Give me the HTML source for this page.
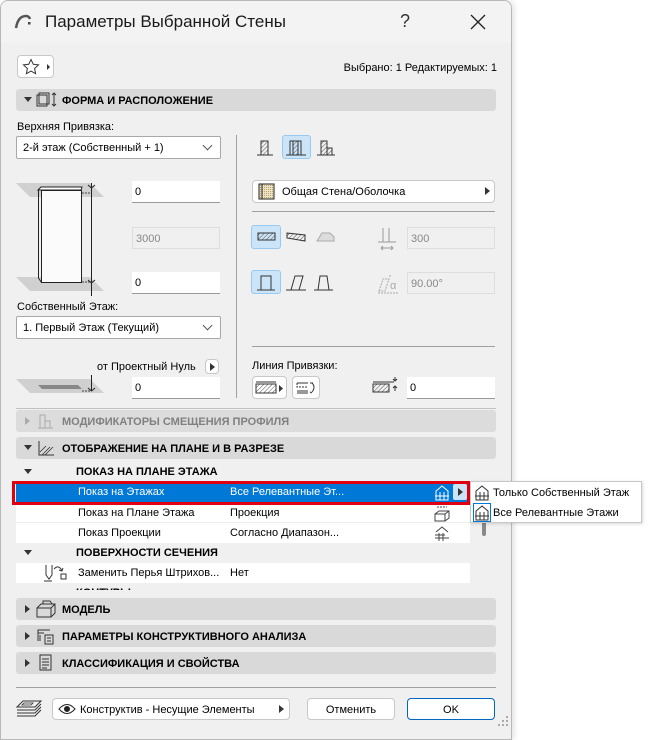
<!DOCTYPE html>
<html><head><meta charset="utf-8"><style>
*{box-sizing:border-box;margin:0;padding:0}
body{width:652px;height:730px;background:#fff;font-family:"Liberation Sans",sans-serif;font-size:11px;color:#000;position:relative;overflow:hidden}
.a{position:absolute}
#dlg{left:0;top:0;width:512px;height:740px;background:#f0f0f0;border:1px solid #b8b8b8;border-radius:8px 8px 0 0;box-shadow:2px 0 6px rgba(0,0,0,.12);overflow:hidden}
#in{position:absolute;left:-1px;top:-1px;width:512px;height:740px}
.inp{position:absolute;background:#fff;border-bottom:1px solid #9a9a9a;height:22px;padding:5px 3px;font-size:11px}
.dis{background:#f0f0f0;border:1px solid #ddd;color:#888}
.dd{position:absolute;background:#fff;border:1px solid #a8a8a8;border-radius:2px;height:23px;padding:5px 6px;font-size:11px}
.dd:after{content:"";position:absolute;right:9px;top:5px;width:6px;height:6px;border-right:1px solid #555;border-bottom:1px solid #555;transform:rotate(45deg)}
.sec{position:absolute;left:16px;width:480px;height:22px;background:#d9d9d9;border-radius:3px;font-weight:bold;font-size:11px;padding:6px 0 0 46px}
.tri{position:absolute;left:8px;top:8px;width:0;height:0}
.td{border-left:4px solid transparent;border-right:4px solid transparent;border-top:5px solid #333}
.tr{border-top:4px solid transparent;border-bottom:4px solid transparent;border-left:5px solid #333;top:7px;left:9px}
.btn{position:absolute;background:#fff;border:1px solid #c8c8c8;border-radius:4px}
.sel{position:absolute;background:#cce4f7;border:1px solid #99c9ef;border-radius:3px}
.hl{position:absolute;height:1px;background:#a0a0a0}
.row{position:absolute;left:16px;width:454px;height:20px;font-size:11px}
.row span{position:absolute;top:4px}
</style></head><body>
<div id="dlg" class="a"><div id="in">
 <div class="a" style="left:0;top:0;width:512px;height:43px;background:#f3f3f3"></div>
 <svg class="a" style="left:14px;top:12px" width="20" height="18"><path d="M2 16 Q4 4 12 4 Q15 4 16 7" fill="none" stroke="#555" stroke-width="2.5"/><rect x="14" y="10" width="2.5" height="2.5" fill="#444"/></svg>
 <div class="a" style="left:45px;top:12px;font-size:17px;color:#1a1a1a">Параметры Выбранной Стены</div>
 <div class="a" style="left:400px;top:11px;font-size:18px;color:#333">?</div>
 <svg class="a" style="left:469px;top:13px" width="18" height="18"><path d="M2 2L16 16M16 2L2 16" stroke="#222" stroke-width="1.3"/></svg>

 <div class="btn" style="left:17px;top:55px;width:37px;height:23px"><svg class="a" style="left:4px;top:2px" width="30" height="18"><path d="M9 1.5l2.3 4.8 5.2.6-3.9 3.6 1 5.2L9 13.1l-4.6 2.6 1-5.2L1.5 6.9l5.2-.6z" fill="none" stroke="#333"/><path d="M25 6v6l3-3z" fill="#333"/></svg></div>
 <div class="a" style="right:15px;top:62px;font-size:11px">Выбрано: 1 Редактируемых: 1</div>

 <div class="sec" style="top:89px"><i class="tri td"></i><svg class="a" style="left:20px;top:3px" width="22" height="16"><rect x="3" y="1" width="10" height="11" fill="none" stroke="#333"/><rect x="1" y="3" width="10" height="11" fill="none" stroke="#333"/><path d="M18 1v13M16 3l2-2 2 2M16 12l2 2 2-2" fill="none" stroke="#333"/></svg>ФОРМА И РАСПОЛОЖЕНИЕ</div>

 <div class="a" style="left:17px;top:121px">Верхняя Привязка:</div>
 <div class="dd" style="left:16px;top:136px;width:205px">2-й этаж (Собственный + 1)</div>
 <div class="a" style="left:236px;top:135px;width:1px;height:263px;background:#a0a0a0"></div>

 <svg class="a" style="left:0;top:176px" width="110" height="120"><path d="M16 7h74l14 14H30z" fill="#d0d0d0"/><path d="M16 101h74l14 14H30z" fill="#d0d0d0"/><path d="M38 14l3-3h41l-1 3z" fill="#fff" stroke="#222"/><rect x="41.5" y="14.5" width="40" height="92" fill="#fbfbfb" stroke="#222"/><path d="M38.5 14v88l3 4.5" fill="none" stroke="#222"/><path d="M91.5 7v115M88 9l3.5 3 3.5-3M88 104l3.5 3 3.5-3" fill="none" stroke="#222"/><path d="M82 17h9M82 106h9" stroke="#444" stroke-dasharray="2 1"/></svg>
 <div class="inp" style="left:132px;top:181px;width:88px">0</div>
 <div class="inp dis" style="left:132px;top:227px;width:88px">3000</div>
 <div class="inp" style="left:132px;top:272px;width:88px">0</div>

 <div class="a" style="left:17px;top:301px">Собственный Этаж:</div>
 <div class="dd" style="left:16px;top:316px;width:205px">1. Первый Этаж (Текущий)</div>
 <div class="a" style="left:97px;top:361px">от Проектный Нуль</div>
 <div class="btn" style="left:205px;top:359px;width:14px;height:15px"><i class="a" style="left:4px;top:3px;border-top:4px solid transparent;border-bottom:4px solid transparent;border-left:5px solid #333"></i></div>
 <svg class="a" style="left:0;top:374px" width="110" height="26"><path d="M16 5h74l14 14H30z" fill="#d0d0d0"/><path d="M38 11h40l4 4H42z" fill="#888"/><path d="M91.5 1v16M88 14l3.5 3 3.5-3" fill="none" stroke="#222"/><path d="M82 17h9" stroke="#444" stroke-dasharray="2 1"/></svg>
 <div class="inp" style="left:132px;top:377px;width:88px">0</div>

 <svg class="a" style="left:255px;top:137px" width="85" height="22"><defs><pattern id="h" width="3" height="3" patternUnits="userSpaceOnUse" patternTransform="rotate(45)"><path d="M0 0v3" stroke="#555"/></pattern></defs><rect x="6" y="4" width="7" height="14" fill="url(#h)" stroke="#333"/><path d="M2 18h16" stroke="#333"/></svg>
 <div class="sel" style="left:282px;top:135px;width:29px;height:24px"></div>
 <svg class="a" style="left:284px;top:137px" width="26" height="22"><rect x="6" y="4" width="11" height="14" fill="none" stroke="#333"/><rect x="9" y="4" width="5" height="14" fill="url(#h)" stroke="#333"/><path d="M2 18h20" stroke="#333"/></svg>
 <svg class="a" style="left:315px;top:137px" width="24" height="22"><rect x="6" y="4" width="6" height="14" fill="url(#h)" stroke="#333"/><rect x="12" y="11" width="5" height="7" fill="url(#h)" stroke="#333"/><path d="M2 18h18" stroke="#333"/></svg>

 <div class="btn" style="left:252px;top:180px;width:243px;height:23px"><svg class="a" style="left:5px;top:2px" width="18" height="18"><defs><pattern id="d" width="2" height="2" patternUnits="userSpaceOnUse"><rect width="1" height="1" fill="#a08040"/><rect width="2" height="2" fill="#d8c890" opacity=".5"/></pattern></defs><rect x="1" y="1" width="15" height="15" fill="url(#d)" stroke="#222"/><path d="M4 1v15" stroke="#222"/></svg><span class="a" style="left:29px;top:5px">Общая Стена/Оболочка</span><i class="a" style="right:4px;top:6px;border-top:4px solid transparent;border-bottom:4px solid transparent;border-left:5px solid #333"></i></div>
 <div class="hl" style="left:252px;top:211px;width:243px"></div>

 <div class="sel" style="left:251px;top:225px;width:30px;height:24px"></div>
 <svg class="a" style="left:251px;top:225px" width="90" height="24"><rect x="7" y="8" width="17" height="7" fill="url(#h)" stroke="#333"/><path d="M36 8l18 2v6l-18-3z" fill="url(#h)" stroke="#333"/><path d="M66 16l5-8h8l4 4v4z" fill="#ddd" stroke="#aaa"/></svg>
 <svg class="a" style="left:376px;top:226px" width="22" height="26" stroke="#999" fill="none"><path d="M7 2v14h6V2M2 16h18M5 22h12M5 22l2-2M5 22l2 2M17 22l-2-2M17 22l-2 2"/></svg>
 <div class="inp dis" style="left:407px;top:227px;width:88px">300</div>

 <div class="sel" style="left:251px;top:270px;width:30px;height:24px"></div>
 <svg class="a" style="left:251px;top:270px" width="90" height="24" fill="none" stroke="#333"><path d="M10 20V6h10v14M6 20h18"/><path d="M40 20l4-14h8l-4 14M35 20h20"/><path d="M67 20l2-14h7l2 14M63 20h19"/></svg>
 <svg class="a" style="left:376px;top:271px" width="26" height="24" fill="none" stroke="#aaa"><path d="M3 20l4-12h6l-4 12zM14 4v3M2 22h20" stroke-dasharray="2 1"/><text x="14" y="18" font-size="11" fill="#aaa" stroke="none" font-family="Liberation Sans">α</text></svg>
 <div class="inp dis" style="left:407px;top:272px;width:88px">90.00°</div>

 <div class="hl" style="left:252px;top:346px;width:243px"></div>
 <div class="a" style="left:252px;top:360px">Линия Привязки:</div>
 <div class="btn" style="left:252px;top:376px;width:35px;height:23px"><svg class="a" style="left:2px;top:3px" width="30" height="17"><rect x="1" y="4" width="20" height="9" fill="url(#h)" stroke="#333"/><path d="M1 2h20" stroke="#333"/><path d="M24 5v7l4-3.5z" fill="#333"/></svg></div>
 <div class="btn" style="left:292px;top:376px;width:28px;height:23px"><svg class="a" style="left:2px;top:2px" width="24" height="18" fill="none" stroke="#333"><path d="M2 4h11M2 12h11M2 14h11" /><path d="M2 4v4h11" stroke-dasharray="2 1"/><path d="M17 4q4 4 0 9M15 4h3M15 13l2 1"/></svg></div>
 <svg class="a" style="left:372px;top:376px" width="30" height="22" fill="none" stroke="#333"><rect x="1" y="8" width="16" height="8" fill="url(#h)"/><path d="M1 6h16M17 6h5" /><path d="M23 1v4M21 3l2 2 2-2M23 15v-5M21 12l2-2 2 2"/></svg>
 <div class="inp" style="left:407px;top:377px;width:88px">0</div>

 <div class="hl" style="left:16px;top:408px;width:480px;background:#c0c0c0"></div>

 <div class="sec" style="top:410px;color:#808080;background:#dcdcdc"><i class="tri tr" style="border-left-color:#aaa"></i><svg class="a" style="left:20px;top:3px" width="20" height="16" fill="none" stroke="#aaa"><path d="M4 15V2h5v13M9 15V8h5v7M2 15h15"/></svg>МОДИФИКАТОРЫ СМЕЩЕНИЯ ПРОФИЛЯ</div>
 <div class="sec" style="top:437px"><i class="tri td"></i><svg class="a" style="left:20px;top:3px" width="20" height="16" fill="none" stroke="#333"><path d="M3 1v14h15"/><path d="M6 15l8-8M9 15l8-8M4 12l6-6" stroke-width=".8"/></svg>ОТОБРАЖЕНИЕ НА ПЛАНЕ И В РАЗРЕЗЕ</div>

 <div class="a" style="left:16px;top:462px;width:454px;height:128px;background:#fff;overflow:hidden">
  <div class="row" style="left:0;top:0;background:#f0f0f0;font-weight:bold"><i class="a" style="left:8px;top:7px;border-left:4px solid transparent;border-right:4px solid transparent;border-top:5px solid #333"></i><span style="left:60px">ПОКАЗ НА ПЛАНЕ ЭТАЖА</span></div>
  <div class="row" style="left:0;top:20px;background:#0078d7;color:#fff;height:21px"><span style="left:62px">Показ на Этажах</span><span style="left:214px">Все Релевантные Эт...</span>
   <svg class="a" style="left:418px;top:2px" width="16" height="17" fill="none" stroke="#fff"><path d="M2 7l6-5 6 5v9H2zM1 12h14M6 8v8M10 8v8"/></svg>
   <div class="a" style="left:437px;top:2px;width:14px;height:16px;background:#cce4f7;border-radius:2px"><i class="a" style="left:5px;top:4px;border-top:4px solid transparent;border-bottom:4px solid transparent;border-left:5px solid #333"></i></div></div>
  <div class="row" style="left:0;top:41px;border-bottom:1px solid #eee"><span style="left:62px">Показ на Плане Этажа</span><span style="left:214px">Проекция</span><svg class="a" style="left:418px;top:2px" width="16" height="17" fill="none" stroke="#444"><path d="M3 2h10" stroke-dasharray="2 1"/><path d="M1 9l4-3h10v7l-4 3H1zM1 9h10v7M11 9l4-3"/></svg></div>
  <div class="row" style="left:0;top:61px"><span style="left:62px">Показ Проекции</span><span style="left:214px">Согласно Диапазон...</span><svg class="a" style="left:418px;top:2px" width="16" height="17" fill="none" stroke="#444"><path d="M2 7l6-5 6 5M1 10h10M1 13h14M5 8v8M9 8v8"/></svg></div>
  <div class="row" style="left:0;top:81px;background:#f0f0f0;font-weight:bold"><i class="a" style="left:8px;top:7px;border-left:4px solid transparent;border-right:4px solid transparent;border-top:5px solid #333"></i><span style="left:60px">ПОВЕРХНОСТИ СЕЧЕНИЯ</span></div>
  <div class="row" style="left:0;top:101px"><svg class="a" style="left:26px;top:1px" width="30" height="18" fill="none" stroke="#333"><path d="M4 1v10l3 4 3-4V1M2 17h8M12 5q5-5 8 2M17 6l3 1 1-3"/><rect x="19" y="10" width="5" height="5"/></svg><span style="left:62px">Заменить Перья Штрихов...</span><span style="left:214px">Нет</span></div>
  <div class="row" style="left:0;top:121px;background:#f0f0f0;font-weight:bold"><i class="a" style="left:8px;top:7px;border-left:4px solid transparent;border-right:4px solid transparent;border-top:5px solid #333"></i><span style="left:60px">КОНТУРЫ</span></div>
 </div>
 <div class="a" style="left:12px;top:481px;width:458px;height:24px;border:3px solid #e00010"></div>
 <div class="a" style="left:482px;top:518px;width:4px;height:18px;background:#888;border-radius:2px"></div>

 <div class="sec" style="top:598px"><i class="tri tr"></i><svg class="a" style="left:20px;top:2px" width="22" height="18" fill="none" stroke="#333"><path d="M1 8h14v9H1zM1 8l4-4h14v9l-4 4M15 8l4-4M7 4V1h7l2 3"/></svg>МОДЕЛЬ</div>
 <div class="sec" style="top:625px"><i class="tri tr"></i><svg class="a" style="left:20px;top:2px" width="22" height="18" fill="none" stroke="#333"><path d="M2 14V3h12M2 6h6M4 8v6"/><rect x="9" y="8" width="8" height="9"/><path d="M11 11h4M11 14h4"/></svg>ПАРАМЕТРЫ КОНСТРУКТИВНОГО АНАЛИЗА</div>
 <div class="sec" style="top:652px"><i class="tri tr"></i><svg class="a" style="left:22px;top:2px" width="16" height="18" fill="none" stroke="#333"><rect x="2" y="1" width="11" height="15"/><path d="M4 5h7M4 8h7M4 11h7M4 14h5"/></svg>КЛАССИФИКАЦИЯ И СВОЙСТВА</div>

 <div class="hl" style="left:16px;top:687px;width:480px"></div>
 <svg class="a" style="left:16px;top:699px" width="26" height="20" fill="none" stroke="#333"><path d="M1 8l6-6h18l-6 6zM1 11h18l6-6M1 14h18l6-6M1 17h18l6-6"/><path d="M8 4h9l-2 2H6z" stroke-width=".8"/></svg>
 <div class="btn" style="left:52px;top:698px;width:238px;height:22px"><svg class="a" style="left:5px;top:4px" width="18" height="12" fill="none" stroke="#222"><path d="M1 6q8-9 16 0q-8 9-16 0z"/><circle cx="9" cy="6" r="2.5" fill="#222"/></svg><span class="a" style="left:27px;top:5px">Конструктив - Несущие Элементы</span><i class="a" style="right:5px;top:6px;border-top:4px solid transparent;border-bottom:4px solid transparent;border-left:5px solid #333"></i></div>
 <div class="btn" style="left:307px;top:698px;width:88px;height:22px;text-align:center;padding-top:5px">Отменить</div>
 <div class="btn" style="left:407px;top:698px;width:88px;height:22px;text-align:center;padding-top:5px;border:1px solid #0067c0">OK</div>
 <svg class="a" style="left:498px;top:716px" width="12" height="12" fill="#aaa"><rect x="8" y="0" width="2" height="2"/><rect x="4" y="4" width="2" height="2"/><rect x="8" y="4" width="2" height="2"/><rect x="0" y="8" width="2" height="2"/><rect x="4" y="8" width="2" height="2"/><rect x="8" y="8" width="2" height="2"/></svg>
</div></div>

<div class="a" style="left:470px;top:481px;width:172px;height:42px;background:#fff;border:1px solid #c8c8c8;box-shadow:1px 1px 3px rgba(0,0,0,.15)">
 <svg class="a" style="left:3px;top:2px" width="16" height="17" fill="none" stroke="#333"><path d="M2 7l6-5 6 5v9H2zM1 12h14M6 8v8M10 8v8"/></svg>
 <div class="a" style="left:22px;top:5px;font-size:11px">Только Собственный Этаж</div>
 <div class="a" style="left:2px;top:21px;width:18px;height:19px;border:1px solid #0078d7"></div>
 <svg class="a" style="left:3px;top:22px" width="16" height="17" fill="none" stroke="#333"><path d="M2 7l6-5 6 5v9H2zM1 12h14M6 8v8M10 8v8"/></svg>
 <div class="a" style="left:22px;top:25px;font-size:11px">Все Релевантные Этажи</div>
</div>
</body></html>
